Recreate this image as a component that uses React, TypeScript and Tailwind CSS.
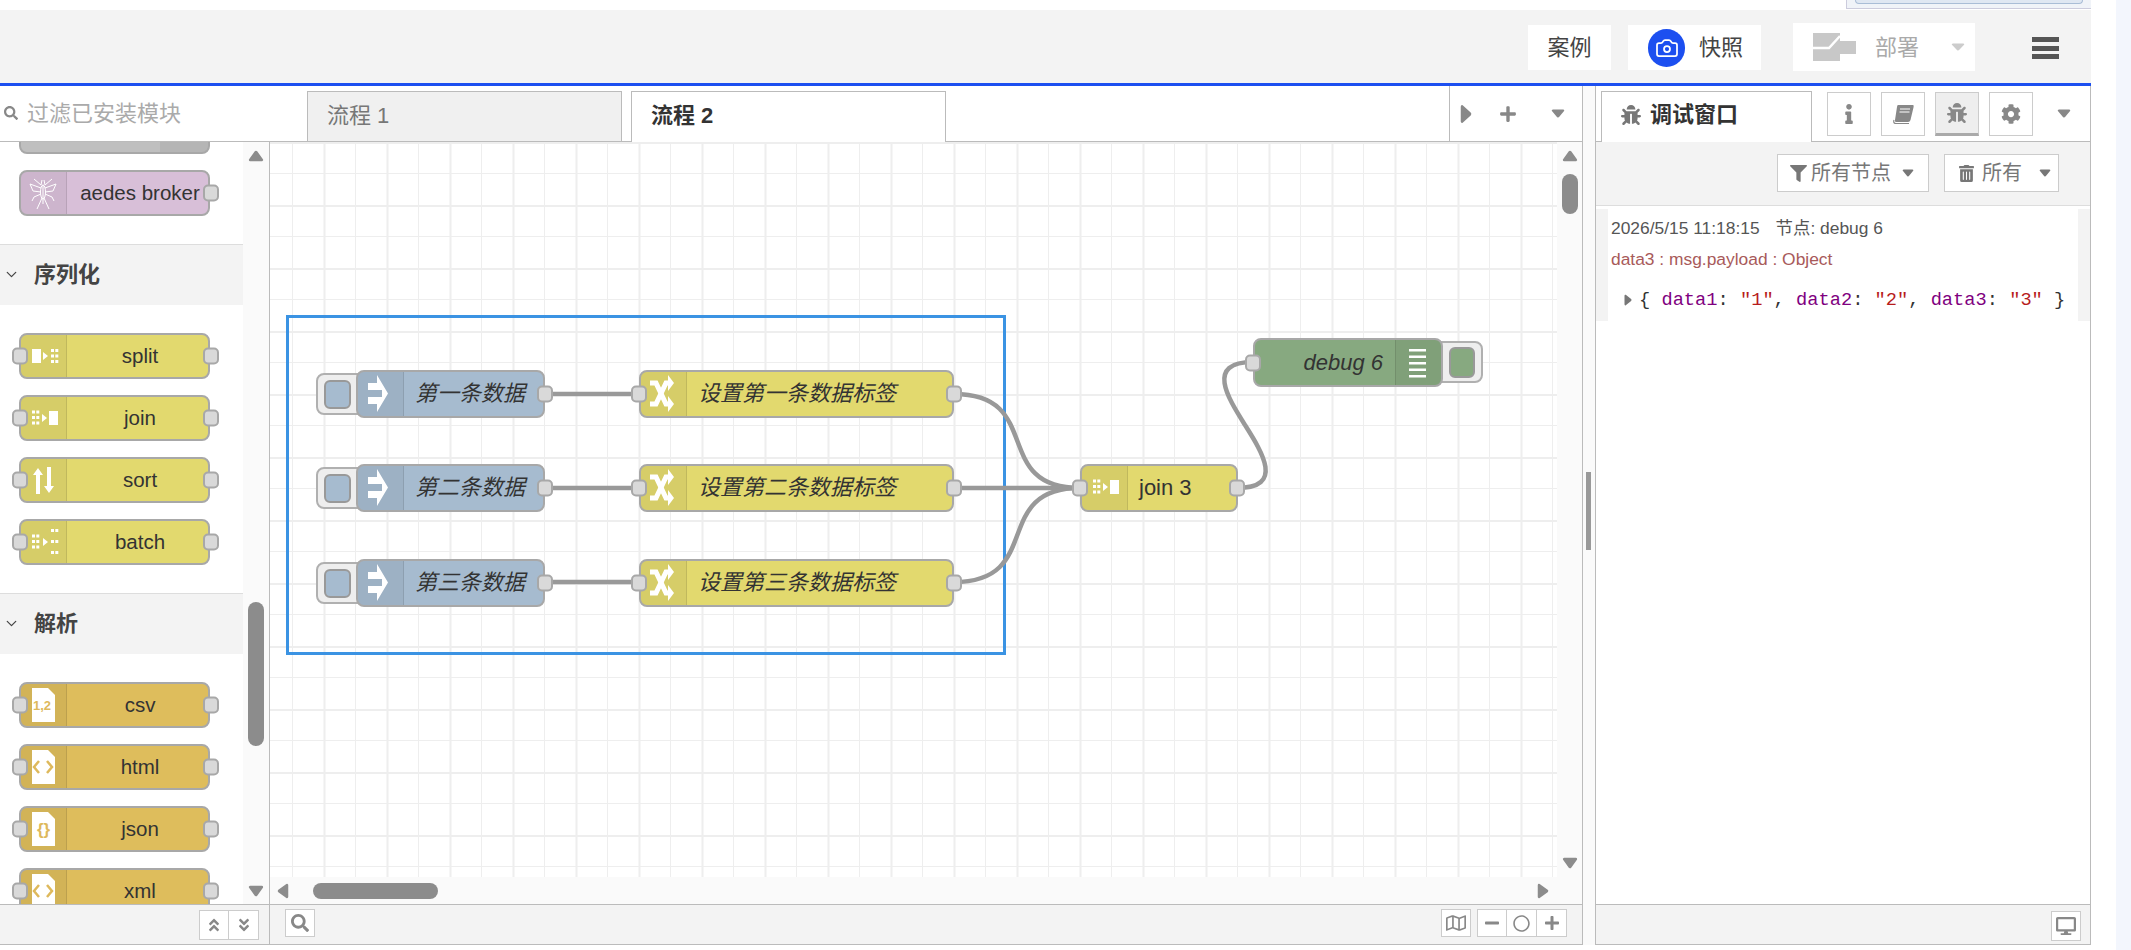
import React from 'react';
import { Camera, ChevronDown } from 'lucide-react';
import {
  FaAngleDoubleDown,
  FaAngleDoubleUp,
  FaBug,
  FaCog,
  FaDesktop,
  FaFilter,
  FaInfo,
  FaMinus,
  FaPlus,
  FaRegCircle,
  FaRegMap,
  FaSearch,
  FaTrashAlt,
} from 'react-icons/fa';

const Tri = ({ dir, className = '' }: { dir: 'up' | 'down' | 'left' | 'right'; className?: string }) => {
  const points = {
    up: '7,2 12,10 2,10',
    down: '2,2 12,2 7,10',
    left: '10,2 10,12 2,7',
    right: '2,2 10,7 2,12',
  }[dir];
  const box = dir === 'up' || dir === 'down' ? '0 0 14 12' : '0 0 12 14';
  return (
    <svg viewBox={box} className={className} preserveAspectRatio="none">
      <polygon points={points} fill="currentColor" stroke="currentColor" strokeWidth="2.5" strokeLinejoin="round" />
    </svg>
  );
};

const Dots = ({ x, ys, cols = 2 }: { x: number; ys: number[]; cols?: number }) => (
  <>
    {ys.map((y) =>
      Array.from({ length: cols }).map((_, i) => (
        <rect key={`${x}-${y}-${i}`} x={x + i * 4.3} y={y} width="3" height="3" fill="#fff" />
      )),
    )}
  </>
);

const page = 'M13 6 H29 L36 13 V40 H13 Z';

const icons: Record<string, React.ReactNode> = {
  split: (
    <>
      <rect x="13" y="16" width="9" height="14" fill="#fff" />
      <polygon points="24,19 29,23 24,27" fill="#fff" />
      <Dots x={32} ys={[16, 21.5, 27]} />
    </>
  ),
  join: (
    <>
      <Dots x={13} ys={[15.5, 21, 26.5]} />
      <polygon points="23,19 28,23 23,27" fill="#fff" />
      <rect x="30" y="16" width="9" height="14" fill="#fff" />
    </>
  ),
  sort: (
    <>
      <path d="M19 11 L24 18 H21 V37 H17 V18 H14 Z" fill="#fff" />
      <path d="M28 10 H32 V29 H35 L30 36 L25 29 H28 Z" fill="#fff" />
    </>
  ),
  batch: (
    <>
      <Dots x={13} ys={[15.5, 21, 26.5]} />
      <polygon points="24,19 29,23 24,27" fill="#fff" />
      <Dots x={32} ys={[10, 21, 32]} />
    </>
  ),
  csv: (
    <>
      <path d={page} fill="#fff" />
      <text x="14" y="28" fontSize="13" fontWeight="700" fill="#deb95c" fontFamily="Liberation Sans">
        1,2
      </text>
    </>
  ),
  html: (
    <>
      <path d={page} fill="#fff" />
      <path d="M20 17 L15 23 L20 29 M28 17 L33 23 L28 29" fill="none" stroke="#deb95c" strokeWidth="2.5" />
    </>
  ),
  json: (
    <>
      <path d={page} fill="#fff" />
      <text x="24.5" y="29" textAnchor="middle" fontSize="17" fontWeight="700" fill="#deb95c" fontFamily="Liberation Sans">
        {'{}'}
      </text>
    </>
  ),
  inject: <path d="M21 5 L32 23.5 L21 42 V34 H12 V27 H26 V20 H12 V13 H21 Z" fill="#fff" />,
  change: (
    <>
      <path d="M11 13 H17 L27 34 H30" fill="none" stroke="#fff" strokeWidth="5" />
      <path d="M11 34 H17 L27 13 H30" fill="none" stroke="#fff" strokeWidth="5" />
      <path d="M29 5 L35 13 L29 21 Z M29 26 L35 34 L29 42 Z" fill="#fff" />
    </>
  ),
  aedes: (
    <g stroke="#fff" strokeWidth="1" fill="none">
      <ellipse cx="24" cy="22" rx="2.5" ry="7" />
      <path d="M24 15 V34 M23 10 L22 15 M25 10 L26 15" />
      <path d="M22 18 L11 14 L14 21 L22 22 M26 18 L37 14 L34 21 L26 22" />
      <path d="M22 15 L15 9 M26 15 L33 9 M22 24 L15 27 L13 31 M26 24 L33 27 L35 31 M23 28 L18 39 M25 28 L30 39" />
    </g>
  ),
  debug: (
    <>
      {[11, 17.5, 24, 30.5, 37].map((y) => (
        <rect key={y} x="15" y={y} width="17" height="2.5" fill="#fff" />
      ))}
    </>
  ),
};
icons.xml = icons.html;

const Port = ({ side, offset }: { side: 'left' | 'right'; offset: number }) => (
  <span
    className="absolute top-1/2 h-[17px] w-[16px] -translate-y-1/2 rounded-[5px] border-2 border-[#a8a8a8] bg-[#d9d9d9]"
    style={side === 'left' ? { left: offset } : { right: offset }}
  />
);

const IconCol = ({ name, right = false }: { name: string; right?: boolean }) => (
  <span className={`h-full w-[46px] shrink-0 bg-black/5 ${right ? 'border-l border-black/10' : 'border-r border-black/10'}`}>
    <svg width="46" height="48" viewBox="2 2 46 48" className="block">
      {icons[name]}
    </svg>
  </span>
);

const PaletteNode = ({ label, icon, color, inPort = true, outPort = true }: { label: string; icon: string; color: string; inPort?: boolean; outPort?: boolean }) => (
  <div className={`relative ml-[19px] flex h-[46px] w-[191px] items-center rounded-[8px] border-2 border-[#a8a8a8] ${color}`}>
    <div className="flex h-full w-full overflow-hidden rounded-[6px]">
      <IconCol name={icon} />
      <span className="flex-1 pl-[5px] text-center text-[20.5px] leading-[42px] text-[#333]">{label}</span>
    </div>
    {inPort && <Port side="left" offset={-9} />}
    {outPort && <Port side="right" offset={-11} />}
  </div>
);

const Category = ({ title }: { title: string }) => (
  <div className="mt-[28px] flex h-[61px] items-center border-t border-[#ddd] bg-[#f3f3f3] pb-[2px] pl-[3px] text-[#444]">
    <ChevronDown size={17} strokeWidth={1.75} />
    <span className="ml-[14px] text-[22px] font-bold">{title}</span>
  </div>
);

const yellow = 'bg-[#e2d96e]';
const orange = 'bg-[#debd5c]';

const Palette = () => (
  <div className="flex w-[270px] shrink-0 flex-col">
    <div className="flex h-[56px] items-center border-b border-[#bbb] pb-[1px] pl-[4px] text-[22px] text-[#aaa]">
      <FaSearch size={14} className="text-[#888]" />
      <span className="ml-[9px]">过滤已安装模块</span>
    </div>
    <div className="flex min-h-0 flex-1 border-r border-[#bbb]">
      <div className="w-[243px] overflow-hidden bg-white">
        <div className="-mt-[34px] flex flex-col">
          <div className="relative ml-[19px] flex h-[46px] w-[191px] justify-end rounded-[8px] border-2 border-[#a8a8a8] bg-[#bfbfbf]">
            <span className="w-[48px] rounded-r-[6px] bg-black/5" />
          </div>
          <div className="mt-[16px]">
            <PaletteNode label="aedes broker" icon="aedes" color="bg-[#d8bfd8]" inPort={false} />
          </div>
          <Category title="序列化" />
          <div className="mt-[28px] flex flex-col gap-[16px]">
            <PaletteNode label="split" icon="split" color={yellow} />
            <PaletteNode label="join" icon="join" color={yellow} />
            <PaletteNode label="sort" icon="sort" color={yellow} />
            <PaletteNode label="batch" icon="batch" color={yellow} />
          </div>
          <Category title="解析" />
          <div className="mt-[28px] flex flex-col gap-[16px]">
            <PaletteNode label="csv" icon="csv" color={orange} />
            <PaletteNode label="html" icon="html" color={orange} />
            <PaletteNode label="json" icon="json" color={orange} />
            <PaletteNode label="xml" icon="xml" color={orange} />
          </div>
        </div>
      </div>
      <div className="flex w-[26px] flex-col items-center bg-[#fafafa] text-[#8c8c8c]">
        <Tri dir="up" className="mt-[8px] h-[12px] w-[16px]" />
        <div className="mt-[440px] h-[144px] w-[16px] rounded-[8px] bg-[#8c8c8c]" />
        <Tri dir="down" className="mb-[7px] mt-auto h-[12px] w-[16px]" />
      </div>
    </div>
    <div className="flex h-[41px] items-start justify-end border-y border-r border-[#bbb] bg-[#f3f3f3] pr-[10px] pt-[5px]">
      <div className="flex h-[30px] border border-[#ccc] bg-white text-[#888]">
        <span className="flex w-[29px] items-center justify-center border-r border-[#ccc]">
          <FaAngleDoubleUp size={16} />
        </span>
        <span className="flex w-[29px] items-center justify-center">
          <FaAngleDoubleDown size={16} />
        </span>
      </div>
    </div>
  </div>
);

type FlowNode = { x: number; y: number; w: number; label: string; icon: string; color: string; button?: boolean };

const rows = [
  { y: 228, a: '第一条数据', b: '设置第一条数据标签' },
  { y: 322, a: '第二条数据', b: '设置第二条数据标签' },
  { y: 417, a: '第三条数据', b: '设置第三条数据标签' },
];

const flowNodes: FlowNode[] = rows.flatMap((r) => [
  { x: 86, y: r.y, w: 189, label: r.a, icon: 'inject', color: 'bg-[#a6bbcf]', button: true },
  { x: 369, y: r.y, w: 315, label: r.b, icon: 'change', color: yellow },
]);

const InjectNode = ({ n }: { n: FlowNode }) => (
  <div className="absolute h-[48px]" style={{ left: n.x, top: n.y, width: n.w }}>
    <div className="absolute -left-[40px] top-[3px] flex h-[42px] w-[50px] items-center rounded-[8px] border-2 border-[#b0b0b0] bg-[#eee] pl-[6px]">
      <span className="h-[29px] w-[27px] rounded-[6px] border-2 border-[#999] bg-[#a6bbcf]" />
    </div>
    <div className={`relative flex h-full items-center rounded-[8px] border-2 border-[#a8a8a8] ${n.color}`}>
      <div className="flex h-full w-full overflow-hidden rounded-[6px]">
        <IconCol name={n.icon} />
        <span className="flex-1 pl-[11px] text-[22px] italic leading-[44px] text-[#333]">{n.label}</span>
      </div>
      <Port side="right" offset={-10} />
    </div>
  </div>
);

const ChangeNode = ({ n, upright = false }: { n: FlowNode; upright?: boolean }) => (
  <div
    className={`absolute flex h-[48px] items-center rounded-[8px] border-2 border-[#a8a8a8] ${n.color}`}
    style={{ left: n.x, top: n.y, width: n.w }}
  >
    <div className="flex h-full w-full overflow-hidden rounded-[6px]">
      <IconCol name={n.icon} />
      <span className={`flex-1 pl-[11px] text-[22px] leading-[44px] text-[#333] ${upright ? '' : 'italic'}`}>{n.label}</span>
    </div>
    <Port side="left" offset={-10} />
    <Port side="right" offset={upright ? -9 : -10} />
  </div>
);

const wires = [
  'M275 252 H369',
  'M275 346 H369',
  'M275 440 H369',
  'M684 252 C775 252 720 346 810 346',
  'M684 346 H810',
  'M684 440 C775 440 720 346 810 346',
  'M967 346 C1015 346 992 310 975 283 C958 256 935 220 983 220',
];

const Canvas = () => (
  <div className="relative min-w-0 flex-1 overflow-hidden bg-white">
    <svg className="absolute inset-0 h-full w-full">
      <defs>
        <pattern id="grid" x="22" y="0" width="63" height="63" patternUnits="userSpaceOnUse">
          <rect x="0" y="0" width="1" height="63" fill="#eee" />
          <rect x="31.5" y="0" width="2" height="63" fill="#eee" />
          <rect x="0" y="0" width="63" height="2" fill="#eee" />
          <rect x="0" y="31" width="63" height="1" fill="#eee" />
        </pattern>
      </defs>
      <rect width="100%" height="100%" fill="url(#grid)" />
      <rect x="17.5" y="174.5" width="717" height="337" fill="none" stroke="#3b93e3" strokeWidth="3" />
      {wires.map((d) => (
        <path key={d} d={d} fill="none" stroke="#999" strokeWidth="4.5" />
      ))}
    </svg>
    {flowNodes.map((n) =>
      n.button ? <InjectNode key={n.label} n={n} /> : <ChangeNode key={n.label} n={n} />,
    )}
    <ChangeNode upright n={{ x: 810, y: 322, w: 158, label: 'join 3', icon: 'join', color: yellow }} />
    <div className="absolute left-[983px] top-[196px] h-[49px] w-[190px]">
      <div className="absolute -right-[40px] top-[3px] flex h-[42px] w-[50px] items-center justify-end rounded-[8px] border-2 border-[#b0b0b0] bg-[#eee] pr-[6px]">
        <span className="h-[31px] w-[26px] rounded-[6px] border-2 border-[#999] bg-[#87a980]" />
      </div>
      <div className="relative flex h-full items-center rounded-[8px] border-2 border-[#a8a8a8] bg-[#87a980]">
        <div className="flex h-full w-full overflow-hidden rounded-[6px]">
          <span className="flex-1 pr-[12px] text-right text-[22px] italic leading-[45px] text-[#333]">debug 6</span>
          <IconCol name="debug" right />
        </div>
        <Port side="left" offset={-10} />
      </div>
    </div>
  </div>
);

const Workspace = () => (
  <div className="flex w-[1313px] shrink-0 flex-col border-r border-[#bbb]">
    <div className="flex h-[56px] items-end border-b border-[#bbb] pl-[37px]">
      <div className="flex h-[50px] w-[315px] items-center border border-b-0 border-[#bbb] bg-[#f0f0f0] pb-[3px] pl-[19px] text-[22px] text-[#777]">
        流程 1
      </div>
      <div className="relative z-10 -mb-px ml-[9px] flex h-[51px] w-[315px] items-center border border-b-0 border-[#bbb] bg-white pb-[4px] pl-[19px] text-[22px] font-bold text-[#333]">
        流程 2
      </div>
      <div className="ml-auto flex h-full w-[133px] items-center border-l border-[#bbb] text-[#888]">
        <Tri dir="right" className="ml-[10px] h-[20px] w-[12px]" />
        <FaPlus size={18} className="ml-[27px]" />
        <Tri dir="down" className="ml-[34px] h-[9px] w-[14px]" />
      </div>
    </div>
    <div className="flex min-h-0 flex-1 flex-col">
      <div className="flex min-h-0 flex-1">
        <Canvas />
        <div className="flex w-[25px] shrink-0 flex-col items-center bg-[#fafafa] text-[#8c8c8c]">
          <Tri dir="up" className="mt-[8px] h-[12px] w-[16px]" />
          <div className="mt-[12px] h-[40px] w-[16px] rounded-[8px] bg-[#8c8c8c]" />
          <Tri dir="down" className="mb-[8px] mt-auto h-[12px] w-[16px]" />
        </div>
      </div>
      <div className="flex h-[27px] items-center bg-[#fafafa] pl-[7px] text-[#8c8c8c]">
        <Tri dir="left" className="h-[16px] w-[12px]" />
        <div className="ml-[24px] h-[16px] w-[125px] rounded-[8px] bg-[#8c8c8c]" />
        <Tri dir="right" className="ml-[1099px] h-[16px] w-[12px]" />
      </div>
    </div>
    <div className="flex h-[41px] items-start border-y border-[#bbb] bg-[#f3f3f3] pt-[4px] text-[#888]">
      <span className="ml-[15px] flex h-[28px] w-[30px] items-center justify-center border border-[#ccc] bg-white">
        <FaSearch size={18} />
      </span>
      <span className="ml-auto flex h-[28px] w-[30px] items-center justify-center border border-[#ccc] bg-white">
        <FaRegMap size={20} />
      </span>
      <div className="ml-[6px] mr-[15px] flex h-[28px] border border-[#ccc] bg-white">
        <span className="flex w-[29px] items-center justify-center border-r border-[#ccc]">
          <FaMinus size={16} />
        </span>
        <span className="flex w-[30px] items-center justify-center border-r border-[#ccc]">
          <FaRegCircle size={17} />
        </span>
        <span className="flex w-[29px] items-center justify-center">
          <FaPlus size={16} />
        </span>
      </div>
    </div>
  </div>
);

const SideButton = ({ children, active = false }: { children: React.ReactNode; active?: boolean }) => (
  <span
    className={`flex h-[44px] w-[44px] items-center justify-center border border-[#ccc] text-[#888] ${
      active ? 'border-b-[3px] border-b-[#aaa] bg-[#eee] text-[#666]' : 'bg-white'
    }`}
  >
    {children}
  </span>
);

const Sidebar = () => (
  <div className="flex w-[496px] shrink-0 flex-col border-x border-[#bbb]">
    <div className="flex h-[56px] items-end border-b border-[#bbb] pl-[5px]">
      <div className="relative z-10 -mb-px flex h-[51px] w-[211px] items-center border border-b-0 border-[#bbb] bg-white pb-[5px] pl-[19px]">
        <FaBug size={20} className="text-[#777]" />
        <span className="ml-[9px] text-[22px] font-bold text-[#333]">调试窗口</span>
      </div>
      <div className="mb-[5px] ml-[15px] flex gap-[10px]">
        <SideButton>
          <FaInfo size={20} />
        </SideButton>
        <SideButton>
          {/* slanted book, the icon pack one is upright */}
          <svg viewBox="0 0 22 19" className="h-[19px] w-[22px]">
            <path d="M6 0 H21 Q22 0 21.6 2 L18.5 15 Q18 17 16 17 H4 Q2.5 17 3 15 L5 2 Q5.2 0 6 0 Z" fill="#888" />
            <path d="M2 15 Q1 18.5 4 18.5 H17" fill="none" stroke="#888" strokeWidth="1.2" />
            <path d="M8 4 H18 M7.5 7 H17.5" stroke="#fff" strokeWidth="1" />
          </svg>
        </SideButton>
        <SideButton active>
          <FaBug size={20} />
        </SideButton>
        <SideButton>
          <FaCog size={20} />
        </SideButton>
      </div>
      <Tri dir="down" className="mb-[23px] ml-[24px] h-[9px] w-[14px] text-[#888]" />
    </div>
    <div className="flex h-[64px] items-start justify-end gap-[15px] border-b border-[#ddd] bg-[#f3f3f3] pr-[31px] pt-[12px] text-[20px] text-[#777]">
      <span className="flex h-[38px] w-[152px] items-center border border-[#ccc] bg-white pl-[12px]">
        <FaFilter size={17} />
        <span className="ml-[4px]">所有节点</span>
        <Tri dir="down" className="ml-[11px] h-[8px] w-[12px]" />
      </span>
      <span className="flex h-[38px] w-[115px] items-center border border-[#ccc] bg-white pl-[13px]">
        <FaTrashAlt size={17} />
        <span className="ml-[7px]">所有</span>
        <Tri dir="down" className="ml-[17px] h-[8px] w-[12px]" />
      </span>
    </div>
    <div className="mt-[3px] h-[112px] bg-[#f3f3f3] px-[12px] text-[17.4px]">
      <div className="h-full bg-white pl-[3px]">
        <div className="flex h-[38px] items-center text-[#555]">
          <span>2026/5/15 11:18:15</span>
          <span className="ml-[16px]">节点: debug 6</span>
        </div>
        <div className="flex h-[24px] items-center text-[#a85a5a]">data3 : msg.payload : Object</div>
        <div className="flex h-[50px] items-center pl-[13px] pt-[8px] font-['Liberation_Mono',monospace] text-[18.7px] text-[#333]">
          <Tri dir="right" className="mr-[7px] h-[12px] w-[8px] text-[#777]" />
          <span className="whitespace-pre">
            {'{ '}
            <span className="text-[#800080]">data1</span>
            {': '}
            <span className="text-[#b71c1c]">"1"</span>
            {', '}
            <span className="text-[#800080]">data2</span>
            {': '}
            <span className="text-[#b71c1c]">"2"</span>
            {', '}
            <span className="text-[#800080]">data3</span>
            {': '}
            <span className="text-[#b71c1c]">"3"</span>
            {' }'}
          </span>
        </div>
      </div>
    </div>
    <div className="flex-1 bg-white" />
    <div className="flex h-[41px] items-start justify-end border-y border-[#bbb] bg-[#f3f3f3] pr-[9px] pt-[6px]">
      <span className="flex h-[30px] w-[30px] items-center justify-center border border-[#ccc] bg-white text-[#888]">
        <FaDesktop size={20} />
      </span>
    </div>
  </div>
);

const Header = () => (
  <div className="flex h-[73px] items-start justify-end bg-[#f3f3f3]">
    <span className="mt-[15px] flex h-[45px] w-[83px] items-center justify-center bg-white text-[22px] text-[#444]">案例</span>
    <span className="ml-[17px] mt-[15px] flex h-[45px] w-[133px] items-center bg-white pl-[20px] text-[22px] text-[#444]">
      <span className="flex h-[38px] w-[37px] items-center justify-center rounded-full bg-[#1c4ff0] text-white">
        <Camera size={24} strokeWidth={1.75} />
      </span>
      <span className="ml-[14px]">快照</span>
    </span>
    <span className="ml-[32px] mt-[13px] flex h-[48px] w-[182px] items-center bg-white pl-[20px] text-[22px] text-[#aaa]">
      <svg viewBox="0 0 43 28" className="h-[28px] w-[43px]">
        <path d="M0 0 H27 V8 H43 V21 H27 V28 H0 Z" fill="#c8c8c8" />
        <path d="M0 15 H16 L27 3" fill="none" stroke="#fff" strokeWidth="2.5" />
      </svg>
      <span className="ml-[19px]">部署</span>
      <Tri dir="down" className="ml-[32px] h-[8px] w-[14px] text-[#ccc]" />
    </span>
    <span className="ml-[57px] mr-[32px] mt-[27px] flex h-[22px] w-[27px] flex-col justify-between">
      <span className="h-[5px] bg-[#555]" />
      <span className="h-[5px] bg-[#555]" />
      <span className="h-[5px] bg-[#555]" />
    </span>
  </div>
);

export default function App() {
  return (
    <div className="flex h-[950px] w-[2131px] overflow-hidden bg-white font-['Liberation_Sans','Noto_Sans_CJK_SC',sans-serif]">
      <div className="flex w-[2091px] shrink-0 flex-col">
        <div className="relative h-[10px] bg-white">
          <div className="absolute right-0 top-0 h-[9px] w-[245px] border-b border-l border-[#ccd] bg-[#f0f3f8] px-[8px]">
            <div className="h-[4px] rounded-b-[6px] border border-t-0 border-[#a9bdd6] bg-[#dfe7f2]" />
          </div>
        </div>
        <Header />
        <div className="h-[3px] bg-[#1c4ff0]" />
        <div className="flex h-[859px]">
          <Palette />
          <Workspace />
          <div className="relative w-[12px] shrink-0 bg-[#fafafa]">
            <div className="absolute left-[3px] top-[386px] h-[78px] w-[5px] bg-[#999]" />
          </div>
          <Sidebar />
        </div>
      </div>
      <div className="w-[25px] shrink-0" />
      <div className="flex-1 bg-[#f3f6fd]" />
    </div>
  );
}
